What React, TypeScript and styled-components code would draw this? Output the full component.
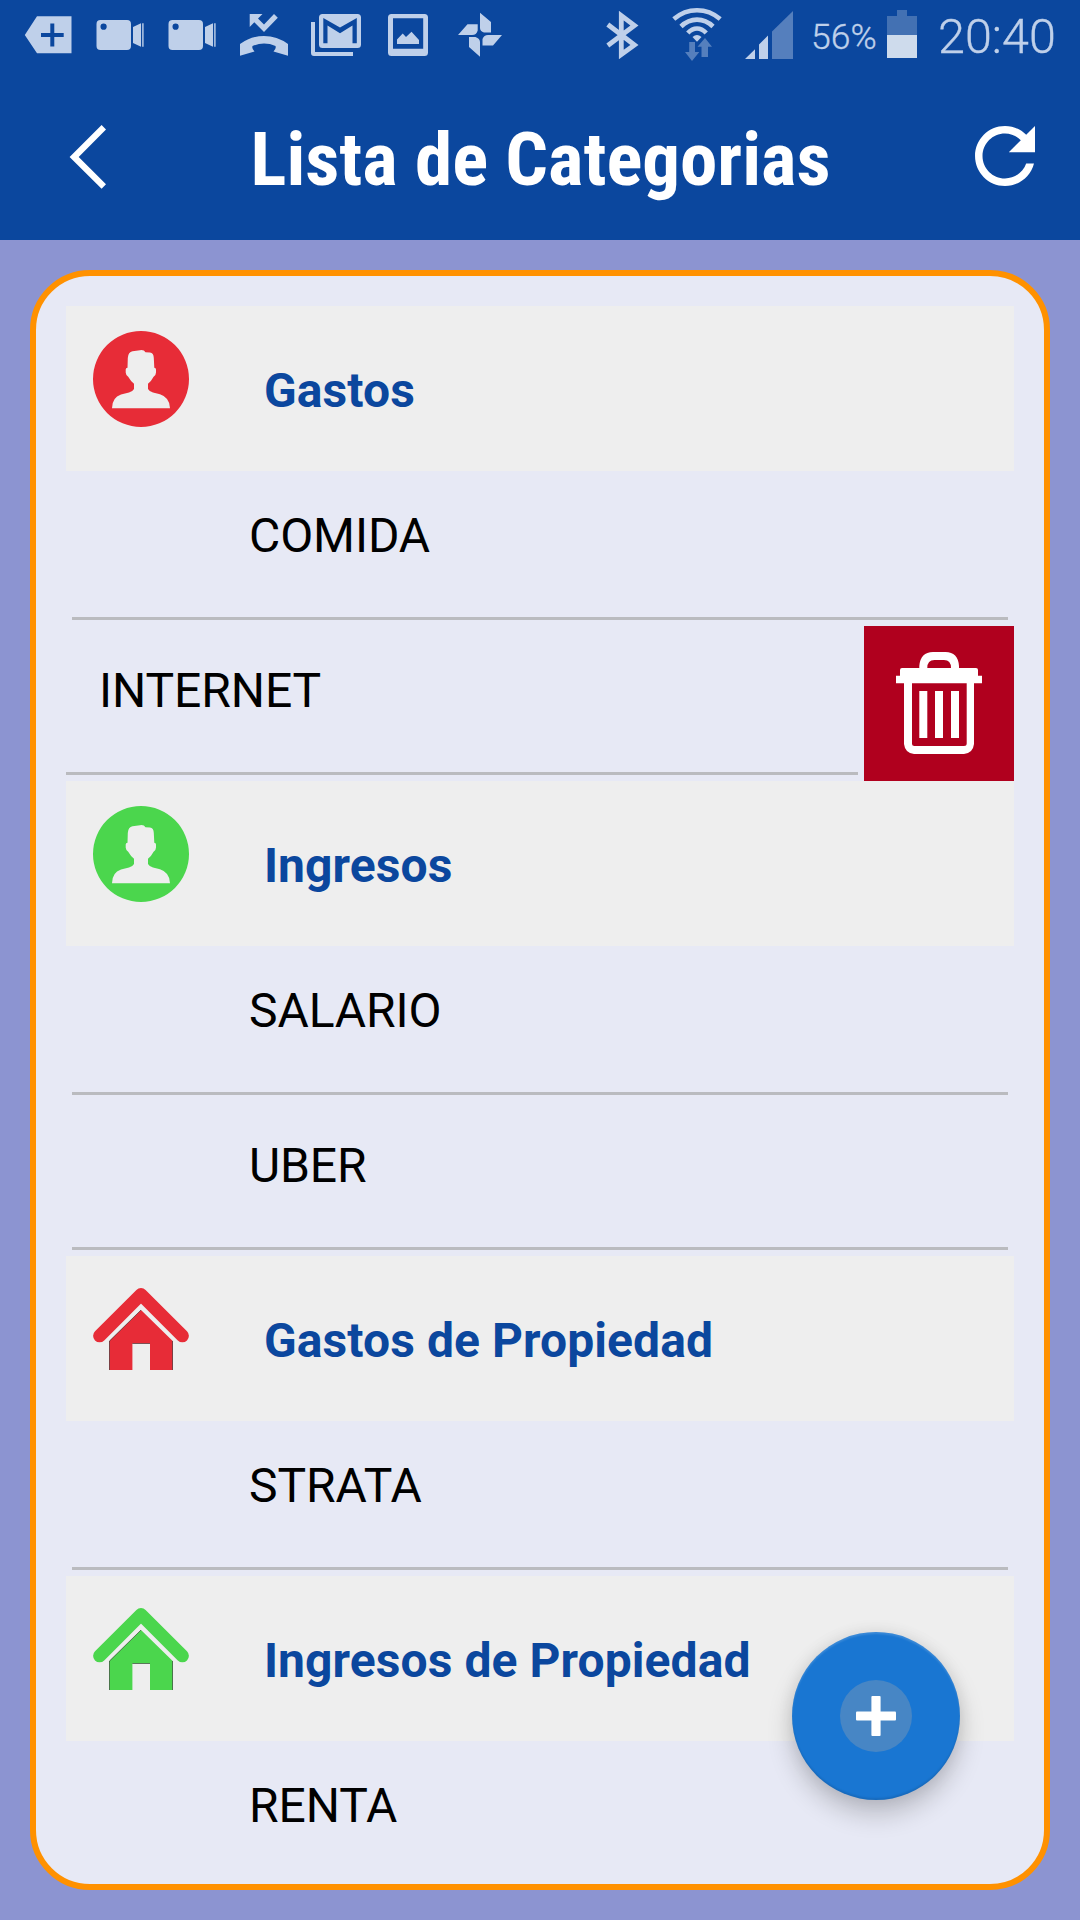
import React from "react";
import styled, { createGlobalStyle } from "styled-components";

const GlobalStyle = createGlobalStyle`
  * { box-sizing: border-box; }
  html, body { margin: 0; padding: 0; overflow: hidden; }
  body { font-family: Roboto, "Liberation Sans", sans-serif; }
`;

const Screen = styled.div`
  width: 1080px;
  height: 1920px;
  display: flex;
  flex-direction: column;
  background: #8c94d1;
  overflow: hidden;
`;

const StatusBar = styled.div`
  height: 72px;
  flex: none;
  display: flex;
  align-items: flex-start;
  background: #0b479e;
  color: #bfd0ea;
`;

const StatusIcon = styled.svg<{ $gap: number }>`
  flex: none;
  height: 72px;
  margin-left: ${(p) => p.$gap}px;
  fill: #bfd0ea;
`;

const StatusText = styled.span<{ $size: number; $gap: number; $width: number; $line: number }>`
  flex: none;
  width: ${(p) => p.$width}px;
  margin-left: ${(p) => p.$gap}px;
  font-size: ${(p) => p.$size}px;
  font-weight: 300;
  -webkit-text-stroke: 0.35px #bfd0ea;
  line-height: ${(p) => p.$line}px;
  white-space: nowrap;
`;

const AppBar = styled.header`
  height: 168px;
  flex: none;
  display: flex;
  align-items: flex-start;
  justify-content: space-between;
  padding: 39px 30px 0 60px;
  background: #0b479e;
`;

const BarButton = styled.button<{ $width: number }>`
  width: ${(p) => p.$width}px;
  height: 90px;
  padding: 0;
  border: 0;
  background: none;
  svg { display: block; fill: #fff; }
`;

const Title = styled.h1`
  margin: 0;
  padding-left: 1px;
  font-family: "Roboto Condensed", Roboto, sans-serif;
  font-stretch: 75%;
  font-size: 75px;
  font-weight: 700;
  line-height: 96px;
  color: #fff;
  white-space: nowrap;
`;

const Card = styled.main`
  flex: 1;
  min-height: 0;
  margin: 30px;
  padding: 30px;
  display: flex;
  flex-direction: column;
  background: #e7e9f5;
  border: 6px solid #ff9100;
  border-radius: 60px;
`;

const List = styled.div`
  flex: 1;
  min-height: 0;
  overflow: hidden;
`;

const GroupHeader = styled.div`
  height: 165px;
  display: flex;
  align-items: flex-start;
  padding: 25px 0 0 27px;
  background: #eeeeee;
  svg { flex: none; display: block; }
`;

const GroupName = styled.h2`
  margin: 0 0 0 75px;
  padding-top: 32px;
  font-size: 48px;
  line-height: 56px;
  font-weight: 700;
  letter-spacing: 0.08px;
  color: #0b479e;
  white-space: nowrap;
`;

const Row = styled.div`
  height: 155px;
  display: flex;
`;

const RowBody = styled.div<{ $open?: boolean }>`
  flex: 1;
  height: 149px;
  margin: 0 6px 0 ${(p) => (p.$open ? 0 : 6)}px;
  padding: 37px 0 0 ${(p) => (p.$open ? 33 : 177)}px;
  border-bottom: 3px solid #babbbf;
  font-size: 48px;
  line-height: 56px;
  letter-spacing: -0.08px;
  color: #000;
  white-space: nowrap;
`;

const DeleteButton = styled.button`
  width: 150px;
  height: 155px;
  padding: 0;
  border: 0;
  background: #b0001e;
  svg { display: block; fill: #fff; }
`;

const Fab = styled.button`
  position: absolute;
  left: 792px;
  top: 1632px;
  width: 168px;
  height: 168px;
  display: flex;
  align-items: center;
  justify-content: center;
  padding: 0;
  border: 0;
  border-radius: 50%;
  background: #1976d2;
  box-shadow: 0 14px 26px rgba(0, 0, 0, 0.2), 0 0 16px rgba(0, 0, 0, 0.08),
    inset 0 2px 2px rgba(255, 255, 255, 0.15), inset 0 -2px 2px rgba(0, 0, 0, 0.1);
`;

const FabCore = styled.span`
  width: 72px;
  height: 72px;
  display: flex;
  align-items: center;
  justify-content: center;
  border-radius: 50%;
  background: #4786c5;
`;

const RED = "#e72c37";
const GREEN = "#4bd64d";

const PersonIcon = ({ color }: { color: string }) => (
  <svg width="96" height="96" viewBox="0 0 96 96">
    <path
      fill={color}
      fillRule="evenodd"
      d="M48 0a48 48 0 1 1 0 96a48 48 0 1 1 0-96ZM34.800 27Q35.200 21 39.500 20.300L47 19.200Q51 18.600 52.500 21.300L57 21.600Q60.600 22 60.800 27L61.300 36.700Q63 37 63 38.500V41.500Q62.800 44.800 60.600 45.800Q58.500 50 55 52.700V58Q56.300 60.500 60 61.500L67 63.200Q77 66.500 77 77.300H19Q19 66.500 28 63.500L36 61.500Q39.700 60.500 41 58V52.700Q37.500 50 35.200 45.800Q33 44.800 32.700 41.500V38.500Q32.700 37 34.500 36.700Z"
    />
  </svg>
);

const HouseIcon = ({ color }: { color: string }) => (
  <svg width="96" height="96" viewBox="0 0 96 96">
    <path d="M6.600 54.800L48 13.500L89.400 54.800" fill="none" stroke={color} strokeWidth="13" strokeLinecap="round" strokeLinejoin="round" />
    <path fill={color} d="M48 29L79.700 60V89H57V62.500H39.400V89H16.300V60Z" />
    <path fill="none" stroke="#222" strokeOpacity="0.7" strokeWidth="0.8" d="M48 29L16.500 60V89M79.500 60V89M39.400 62.500H57" />
  </svg>
);

const TrashIcon = () => (
  <svg width="150" height="155" viewBox="864 626 150 155">
    <path
      fillRule="evenodd"
      d="M919.300 668V666Q920.500 652 933 652H945.500Q958 652 959 666V668H976Q978 668 978 670V675.700H982V683.300H974V744Q973 753 964 754H914Q905 753 904 744V683.300H896V675.700H900V670Q900 668 902 668ZM927.300 668H951Q951 660 944 660H934.500Q927.300 660 927.300 668ZM912 683.300V743.500Q912 746 914.500 746H964Q966.700 746 966.700 743.500V683.300Z"
    />
    <path d="M919.300 691h8v47h-8zM935 691h8v47h-8zM951 691h8v47h-8z" />
  </svg>
);

const VideoIcon = ({ gap }: { gap: number }) => (
  <StatusIcon $gap={gap} width="48" viewBox="96 0 48 72">
    <path fillRule="evenodd" d="M100.500 20H127a4 4 0 0 1 4 4V46a4 4 0 0 1-4 4H100.500a4 4 0 0 1-4-4V24a4 4 0 0 1 4-4ZM103.600 23.600a3.100 3.100 0 1 0 0 6.200a3.100 3.100 0 1 0 0-6.200Z" />
    <path d="M133 27L141 23.300V46.700L133 43ZM142.200 23.300h1.400v23.400h-1.400z" />
  </StatusIcon>
);

type Item = { name: string; open?: boolean };
type Group = { name: string; icon: React.ReactNode; items: Item[] };

const groups: Group[] = [
  { name: "Gastos", icon: <PersonIcon color={RED} />, items: [{ name: "COMIDA" }, { name: "INTERNET", open: true }] },
  { name: "Ingresos", icon: <PersonIcon color={GREEN} />, items: [{ name: "SALARIO" }, { name: "UBER" }] },
  { name: "Gastos de Propiedad", icon: <HouseIcon color={RED} />, items: [{ name: "STRATA" }] },
  { name: "Ingresos de Propiedad", icon: <HouseIcon color={GREEN} />, items: [{ name: "RENTA" }] },
];

const Status = () => (
  <StatusBar>
    <StatusIcon $gap={24} width="48" viewBox="24 0 48 72">
      <path fillRule="evenodd" d="M24.800 35L37 16.200H71.500V53.300H37ZM50.300 23.500V33H41V37H50.300V46.500H54.300V37H63.700V33H54.300V23.500Z" />
    </StatusIcon>
    <VideoIcon gap={24} />
    <VideoIcon gap={24} />
    <StatusIcon $gap={24} width="48" viewBox="240 0 48 72">
      <path d="M249.700 14H262.500L258 18.400L264 24.600L274 14L277.800 17.800L264 32L254.300 22.200L249.700 27Z" />
      <path d="M240 44Q251 36 264 36Q277 36 288 44V55.700L273.500 51.500Q276.500 48.500 275.500 46Q270 43.600 264 43.600Q258 43.600 252.500 46Q251.500 48.500 254.500 51.500L240 55.700Z" />
    </StatusIcon>
    <StatusIcon $gap={22} width="52" viewBox="310 0 52 72">
      <path d="M311 22H315V52H353V56H314Q311 56 311 53Z" />
      <path fillRule="evenodd" d="M322.500 14H357.500Q361 14 361 17.500V44.500Q361 48 357.500 48H322.500Q319 48 319 44.500V17.500Q319 14 322.500 14ZM323.300 18V43.300H327.500V25.500L340 33.300L352.500 25.500V43.300H356.800V18L340 27.500Z" />
    </StatusIcon>
    <StatusIcon $gap={26} width="40" viewBox="388 0 40 72">
      <path fillRule="evenodd" d="M391.500 14H424.500Q428 14 428 17.500V52.500Q428 56 424.500 56H391.500Q388 56 388 52.500V17.500Q388 14 391.500 14ZM393 18.200V48.700H423.200V18.200Z" />
      <path d="M397 44V39.500L402.700 33.500L406 37L411.500 31.700L419 40V44Z" />
    </StatusIcon>
    <StatusIcon $gap={30} width="44" viewBox="458 0 44 72">
      <path d="M480 12.700L491 22V32.500H484Q480 31 480 28ZM502 35L493 45.500H482.500V39Q484 35 488 35ZM480 56.700L469 47V37H475.500Q480 38.500 480 42ZM458 35L467.500 24.200H477.700V30.500Q476.500 35 472 35Z" />
    </StatusIcon>
    <StatusIcon $gap={104} width="33" viewBox="606 0 33 72">
      <path d="M607.800 24.500L634.500 45L621.300 54.500V15.500L634.500 25.500L607.800 45.500" fill="none" stroke="#bfd0ea" strokeWidth="4.800" />
    </StatusIcon>
    <StatusIcon $gap={32} width="52" viewBox="671 0 52 72">
      <g fill="none" stroke="#bfd0ea" strokeWidth="4.600">
        <path d="M673.800 19Q684 10.200 697 10.200Q710 10.200 720.200 19" />
        <path d="M681 26.500Q688 19.600 697 19.600Q706 19.600 713 26.500" />
        <path d="M687.800 33Q692 28.500 697 28.500Q702 28.500 706.200 33" />
      </g>
      <path d="M692.500 37Q697 33 701.500 37L697 41.700Z" />
      <path fill="#557fbd" d="M689.200 42H695V52H699.300L692 61L685 52H689.200ZM705 38L712 46.700H708V57H701.500V46.700H697.500Z" />
    </StatusIcon>
    <StatusIcon $gap={21} width="50" viewBox="744 0 50 72">
      <path d="M745 59L755 49.300V59ZM759 59V44.500L768 35.500V59Z" />
      <path fill="#557fbd" d="M772 59V31.500L793 11V59Z" />
    </StatusIcon>
    <StatusText $size={35.5} $gap={17} $width={76} $line={74}>56%</StatusText>
    <StatusIcon $gap={0} width="30" viewBox="887 0 30 72">
      <path fill="#4371b3" d="M897 10H907V16H917V58H887V16H897Z" />
      <path fill="#cedbec" d="M887 35H917V58H887Z" />
    </StatusIcon>
    <StatusText $size={48.5} $gap={21} $width={130} $line={73}>20:40</StatusText>
  </StatusBar>
);

export default function App() {
  return (
    <>
      <GlobalStyle />
      <Screen>
        <Status />
        <AppBar>
          <BarButton $width={90} aria-label="Volver">
            <svg width="90" height="90" viewBox="60 111 90 90">
              <path d="M69.600 157L101.600 125L106 129.500L78.700 157L106 184.300L101.600 188.700Z" />
            </svg>
          </BarButton>
          <Title>Lista de Categorias</Title>
          <BarButton $width={120} aria-label="Actualizar">
            <svg width="120" height="90" viewBox="-8 0 32 24">
              <path d="M17.650 6.350C16.200 4.900 14.210 4 12 4c-4.420 0-7.990 3.580-7.990 8s3.570 8 7.990 8c3.730 0 6.840-2.550 7.730-6h-2.080c-.82 2.330-3.040 4-5.650 4-3.310 0-6-2.690-6-6s2.690-6 6-6c1.660 0 3.140.69 4.220 1.780L13 11h7V4l-2.350 2.350z" />
            </svg>
          </BarButton>
        </AppBar>
        <Card>
          <List>
            {groups.map((group) => (
              <section key={group.name}>
                <GroupHeader>
                  {group.icon}
                  <GroupName>{group.name}</GroupName>
                </GroupHeader>
                {group.items.map((item) => (
                  <Row key={item.name}>
                    <RowBody $open={item.open}>{item.name}</RowBody>
                    {item.open && (
                      <DeleteButton aria-label="Eliminar">
                        <TrashIcon />
                      </DeleteButton>
                    )}
                  </Row>
                ))}
              </section>
            ))}
          </List>
        </Card>
        <Fab aria-label="Agregar">
          <FabCore>
            <svg width="40" height="40" viewBox="0 0 40 40" fill="#fff">
              <rect x="15.400" width="9.200" height="40" rx="1" />
              <rect y="15.400" width="40" height="9.200" rx="1" />
            </svg>
          </FabCore>
        </Fab>
      </Screen>
    </>
  );
}
